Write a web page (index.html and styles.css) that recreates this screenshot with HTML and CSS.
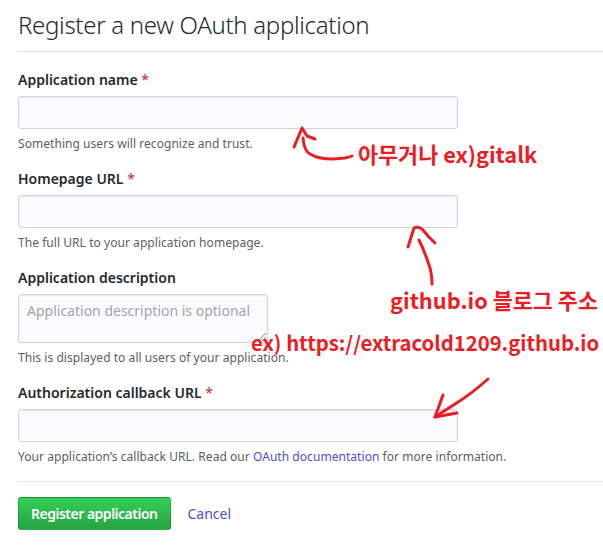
FILE: index.html
```html
<!DOCTYPE html>
<html lang="en">
<head>
<meta charset="utf-8">
<title>Register a new OAuth application</title>
<link rel="stylesheet" href="styles.css">
</head>
<body>
<div class="page">
  <h1 class="title">Register a new OAuth application</h1>
  <form class="form">
    <div class="group">
      <label class="label">Application name <span class="req">*</span></label>
      <input class="input" type="text">
      <p class="note">Something users will recognize and trust.</p>
    </div>
    <div class="group">
      <label class="label">Homepage URL <span class="req">*</span></label>
      <input class="input" type="text">
      <p class="note">The full URL to your application homepage.</p>
    </div>
    <div class="group">
      <label class="label">Application description</label>
      <div class="textarea">Application description is optional<span class="grip"></span></div>
      <p class="note">This is displayed to all users of your application.</p>
    </div>
    <div class="group">
      <label class="label">Authorization callback URL <span class="req">*</span></label>
      <input class="input" type="text">
      <p class="note">Your application’s callback URL. Read our <a class="link" href="#">OAuth documentation</a> for more information.</p>
    </div>
    <div class="actions">
      <button class="btn" type="button">Register application</button>
      <a class="cancel" href="#">Cancel</a>
    </div>
  </form>

  <svg class="marks" width="603" height="551" viewBox="0 0 603 551">
    <g fill="none" stroke="#ed1c24" stroke-width="3" stroke-linecap="round" stroke-linejoin="round">
      <path d="M294 147 L302 128 L307 136 L315 139"/>
      <path d="M303 138 Q304 151 310 154 Q318 159 333 159 L345 158 Q350 157 352 156"/>
      <path d="M408 247 L414 228 Q418 226 422 229 L428 236 L435 243"/>
      <path d="M419 240 Q424 250 428 262 Q432 272 432 284"/>
      <path d="M488 379 Q470 395 455 404 Q444 411 435 417"/>
      <path d="M443 395 L435 417 L457 413"/>
    </g>
  </svg>
  <div class="note-red n1">아무거나 ex)gitalk</div>
  <div class="note-red n2">github.io 블로그 주소</div>
  <div class="note-red n3">ex) https://extracold1209.github.io</div>
</div>
</body>
</html>
```
FILE: styles.css
```css
* { box-sizing: border-box; }
html, body { margin: 0; padding: 0; background: #fff; }
body {
  font-family: "Noto Sans", "Open Sans", Arial, sans-serif;
  color: #24292e;
  width: 603px;
  height: 551px;
  overflow: hidden;
}
.page {
  position: relative;
  padding: 0 0 0 18px;
  height: 551px;
}
.title {
  margin: 0;
  padding: 10px 0 11px;
  font-size: 24px;
  line-height: 30px;
  font-weight: 300;
  color: #24292e;
  border-bottom: 1px solid #e1e4e8;
  letter-spacing: -0.3px;
}
.form { padding-top: 18px; }
.group {
  display: flex;
  flex-direction: column;
  align-items: flex-start;
  margin-bottom: 16px;
}
.label {
  font-size: 14px;
  line-height: 20px;
  font-weight: 600;
  margin-bottom: 6px;
}
.req { color: #cb2431; font-weight: 400; }
.input {
  width: 440px;
  height: 33px;
  background: #fafbfc;
  border: 1px solid #d1d5da;
  border-radius: 3px;
  box-shadow: inset 0 1px 2px rgba(27,31,35,.075);
  margin: 0;
  padding: 0 8px;
}
.textarea {
  position: relative;
  width: 250px;
  height: 49px;
  background: #fafbfc;
  border: 1px solid #d1d5da;
  border-radius: 3px;
  box-shadow: inset 0 1px 2px rgba(27,31,35,.075);
  padding: 6px 8px;
  font-size: 14px;
  line-height: 20px;
  color: #a0a6ad;
}
.grip {
  position: absolute;
  right: 1px;
  bottom: 1px;
  width: 8px;
  height: 8px;
  background: linear-gradient(135deg, transparent 45%, #888 46%, #888 54%, transparent 55%, transparent 70%, #888 71%, #888 78%, transparent 79%);
}
.note {
  margin: 6px 0 0;
  font-size: 12px;
  line-height: 18px;
  color: #586069;
  letter-spacing: 0.05px;
}
.link { color: #4b4fd8; text-decoration: none; }
.actions {
  border-top: 1px solid #e1e4e8;
  margin-top: -1px;
  padding-top: 15px;
  display: flex;
  align-items: center;
  gap: 17px;
}
.btn {
  height: 33px;
  padding: 0 12px;
  font-family: inherit;
  font-size: 14px;
  font-weight: 600;
  letter-spacing: -0.5px;
  color: #fff;
  background: linear-gradient(-180deg, #34d058 0%, #28a745 90%);
  border: 1px solid rgba(27,31,35,.2);
  border-radius: 3px;
}
.cancel {
  font-size: 14px;
  color: #4b4fd8;
  text-decoration: none;
}
.marks {
  position: absolute;
  left: 0;
  top: 0;
  pointer-events: none;
}
.note-red {
  position: absolute;
  font-family: "Noto Sans CJK KR", "Noto Sans", sans-serif;
  font-weight: 700;
  line-height: 24px;
  color: #ed1c24;
  white-space: nowrap;
}
.n1 { left: 358px; top: 142px; font-size: 21.8px; }
.n2 { left: 390px; top: 288px; font-size: 21.8px; }
.n3 { left: 251px; top: 330px; font-size: 20.3px; }
```
